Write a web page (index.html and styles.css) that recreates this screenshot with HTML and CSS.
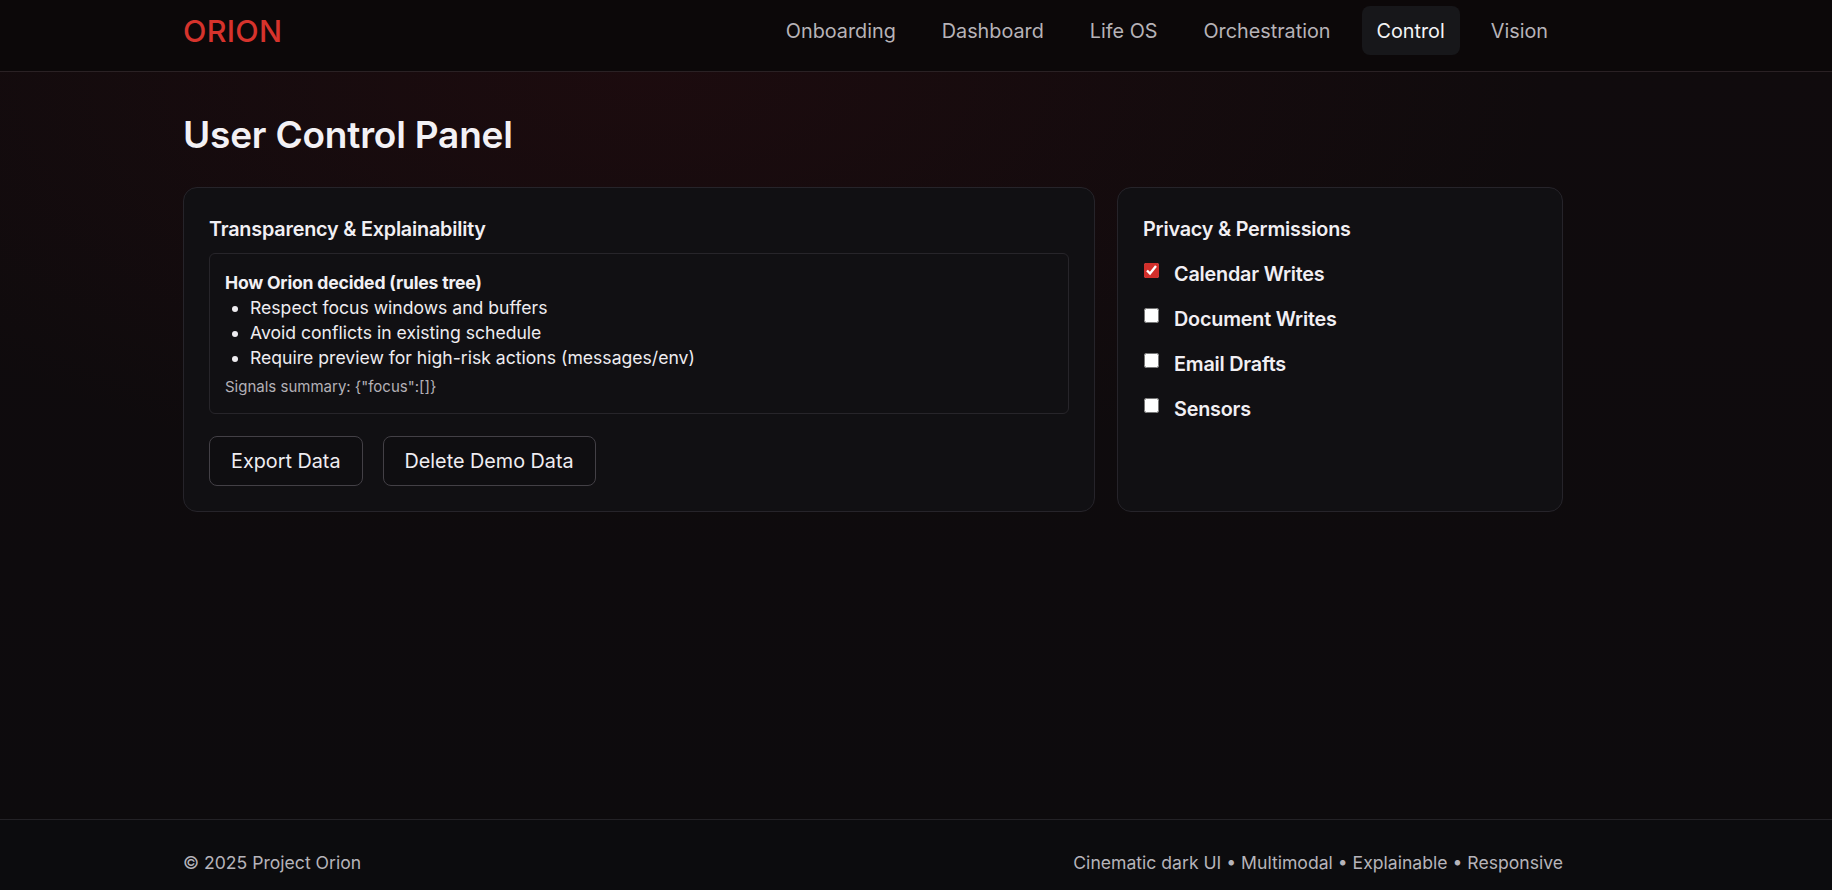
FILE: index.html
```html
<!DOCTYPE html>
<html lang="en">
<head>
<meta charset="utf-8">
<title>Project Orion — User Control Panel</title>
<link rel="stylesheet" href="styles.css">
</head>
<body>
<header class="site-header">
  <div class="container header-row">
    <a class="logo" href="#">ORION</a>
    <nav class="nav">
      <a class="nav-link" href="#">Onboarding</a>
      <a class="nav-link" href="#">Dashboard</a>
      <a class="nav-link" href="#">Life OS</a>
      <a class="nav-link" href="#">Orchestration</a>
      <a class="nav-link active" href="#">Control</a>
      <a class="nav-link" href="#">Vision</a>
    </nav>
  </div>
</header>
<main class="main">
  <div class="container">
    <h1 class="page-title">User Control Panel</h1>
    <div class="grid">
      <section class="card">
        <h3 class="card-title">Transparency &amp; Explainability</h3>
        <div class="explain">
          <div class="explain-title">How Orion decided (rules tree)</div>
          <ul class="rules">
            <li>Respect focus windows and buffers</li>
            <li>Avoid conflicts in existing schedule</li>
            <li>Require preview for high-risk actions (messages/env)</li>
          </ul>
          <div class="signals">Signals summary: {"focus":[]}</div>
        </div>
        <div class="actions">
          <button class="btn" type="button">Export Data</button>
          <button class="btn" type="button">Delete Demo Data</button>
        </div>
      </section>
      <section class="card">
        <h3 class="card-title">Privacy &amp; Permissions</h3>
        <div class="perms">
          <label class="perm"><input type="checkbox" checked><span>Calendar Writes</span></label>
          <label class="perm"><input type="checkbox"><span>Document Writes</span></label>
          <label class="perm"><input type="checkbox"><span>Email Drafts</span></label>
          <label class="perm"><input type="checkbox"><span>Sensors</span></label>
        </div>
      </section>
    </div>
  </div>
</main>
<footer class="site-footer">
  <div class="container footer-row">
    <span>© 2025 Project Orion</span>
    <span>Cinematic dark UI • Multimodal • Explainable • Responsive</span>
  </div>
</footer>
</body>
</html>
```
FILE: styles.css
```css
* { box-sizing: border-box; }

html, body {
  margin: 0;
  padding: 0;
}

body {
  font-family: Inter, "Noto Sans", "Liberation Sans", sans-serif;
  color: #eeecf0;
  background: #0c0b0d;
}

a { text-decoration: none; color: inherit; }

.container {
  width: 1380px;
  margin-left: 183px;
}

.site-header {
  background: #0c0809;
  border-bottom: 1px solid #2a2124;
  padding: 6px 0 16px;
}

.header-row {
  display: flex;
  align-items: center;
  justify-content: space-between;
}

.logo {
  font-size: 30.5px;
  font-weight: 500;
  color: #d6332c;
  line-height: 36px;
  letter-spacing: 0.3px;
}

.nav {
  display: flex;
  gap: 16px;
}

.nav-link {
  font-size: 19.8px;
  line-height: 25px;
  padding: 13px 15px 11px;
  border-radius: 8px;
  color: #b7b3b8;
}

.nav-link.active {
  background: #17171a;
  color: #f4f4f6;
}

.main {
  min-height: 747px;
  background:
    radial-gradient(ellipse 1300px 600px at 35% 0%, rgba(60, 12, 18, 0.28), rgba(0,0,0,0) 70%),
    linear-gradient(180deg, #100b0d 0%, #0d0b0d 100%);
  padding-top: 40px;
}

.page-title {
  margin: 0 0 29px;
  font-size: 37px;
  line-height: 46px;
  font-weight: 600;
  color: #f3f1f5;
  letter-spacing: -0.2px;
}

.grid {
  display: grid;
  grid-template-columns: minmax(0, 912fr) minmax(0, 446fr);
  gap: 22px;
}

.card {
  background: #111013;
  border: 1px solid #26242a;
  border-radius: 14px;
  padding: 26px 25px 25px;
}

.card-title {
  margin: 0;
  font-size: 19.8px;
  line-height: 30px;
  font-weight: 600;
  color: #f1eff3;
  letter-spacing: -0.2px;
}

.explain {
  margin-top: 9px;
  border: 1px solid #27252a;
  border-radius: 6px;
  padding: 16px 15px 15px;
}

.explain-title {
  font-size: 17.6px;
  line-height: 25px;
  font-weight: 700;
  color: #f2f0f4;
  letter-spacing: -0.2px;
}

.rules {
  margin: 0;
  padding-left: 25px;
  font-size: 17.6px;
  line-height: 25px;
  color: #eeecf0;
}

.signals {
  margin-top: 6px;
  font-size: 15px;
  line-height: 22px;
  color: #b4b1b7;
}

.actions {
  display: flex;
  gap: 20px;
  margin-top: 22px;
}

.btn {
  font-family: inherit;
  font-size: 19.8px;
  line-height: 24px;
  padding: 12px 21px;
  color: #efedf1;
  background: #0f0e11;
  border: 1px solid #434046;
  border-radius: 8px;
}

.perms {
  margin-top: 16px;
  display: flex;
  flex-direction: column;
  gap: 17px;
}

.perm {
  display: flex;
  align-items: flex-start;
  gap: 15px;
  font-size: 19.8px;
  line-height: 28px;
  font-weight: 600;
  color: #f1eff3;
  letter-spacing: -0.2px;
}

.perm input {
  width: 15px;
  height: 15px;
  margin: 3px 0 0 1px;
  accent-color: #d12f2b;
}

.site-footer {
  background: #0c0c0e;
  border-top: 1px solid #232226;
  padding: 30px 0 32px;
}

.footer-row {
  display: flex;
  justify-content: space-between;
  font-size: 17.6px;
  line-height: 25px;
  color: #b6b4ba;
}
```
